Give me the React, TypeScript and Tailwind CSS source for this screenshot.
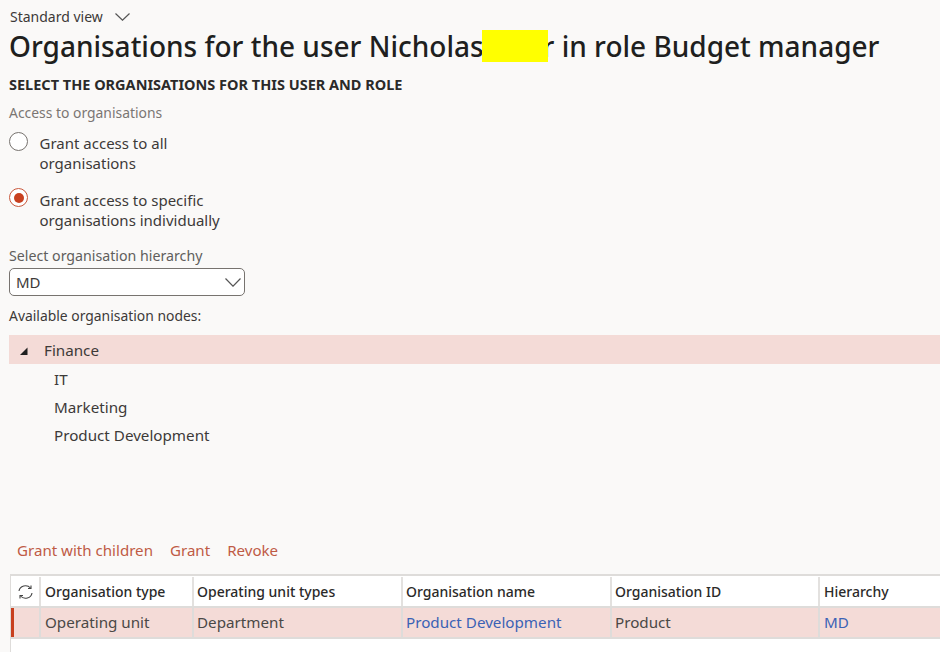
const font = { fontFamily: '"Noto Sans", sans-serif' }

function Chevron({ w, h }: { w: number; h: number }) {
  return (
    <svg width={w} height={h} viewBox={`0 0 ${w} ${h}`} fill="none" stroke="#555" strokeWidth="1.2">
      <path d={`M0.5 0.5 L${w / 2} ${h - 0.8} L${w - 0.5} 0.5`} />
    </svg>
  )
}

function Radio({ checked, lines }: { checked?: boolean; lines: string[] }) {
  return (
    <div className="flex items-start">
      <div
        className={`flex h-[19px] w-[19px] shrink-0 items-center justify-center rounded-full border-[1.5px] bg-white ${
          checked ? 'border-[#c9583c]' : 'border-[#77736f]'
        }`}
      >
        {checked && <div className="h-[10px] w-[10px] rounded-full bg-[#c8401f]" />}
      </div>
      <div className={`ml-[11.5px] text-[15px] leading-[20px] text-[#3d3a38] ${checked ? 'mt-[2px]' : 'mt-[1px]'}`}>
        {lines.map((l) => (
          <div key={l}>{l}</div>
        ))}
      </div>
    </div>
  )
}

export default function App() {
  return (
    <div
      className="flex h-[652px] w-[940px] flex-col overflow-hidden bg-[#faf9f8] text-[#323130]"
      style={font}
    >
      <div className="pl-[10px] pt-[8px] flex items-center text-[14px] leading-[18px] text-[#3d3a38]">
        Standard view
        <span className="ml-[12px]">
          <Chevron w={15} h={8} />
        </span>
      </div>
      <h1 className="pl-[9px] mt-[2px] flex h-[36px] items-center whitespace-nowrap text-[28px] font-medium leading-[36px] text-[#201f1e]">
        Organisations for the user Nicholas
        <span className="relative z-10 ml-[-2px] inline-block h-[32px] w-[66px] bg-[#ffff00]" />
        <span className="ml-[-5px] whitespace-pre">r in role Budget manager</span>
      </h1>
      <div className="pl-[9px] mt-[10px] text-[14.5px] font-bold leading-[20px] text-[#2b2a29]">
        SELECT THE ORGANISATIONS FOR THIS USER AND ROLE
      </div>
      <div className="pl-[9px] mt-[10px] text-[13.9px] leading-[18px] text-[#7a7673]">
        Access to organisations
      </div>

      <div className="pl-[9px] mt-[10px] flex flex-col gap-[15px]">
        <Radio lines={['Grant access to all', 'organisations']} />
        <Radio checked lines={['Grant access to specific', 'organisations individually']} />
      </div>

      <div className="pl-[9px] mt-[17px] text-[14.2px] leading-[18px] text-[#605e5c]">
        Select organisation hierarchy
      </div>
      <div className="ml-[9px] mt-[3px] flex h-[28px] w-[236px] items-center justify-between rounded-[5px] border-[1.5px] border-[#77736f] bg-white pl-[6px] pr-[3px] text-[15px] text-[#3d3a38]">
        MD
        <Chevron w={16} h={9} />
      </div>
      <div className="pl-[9px] mt-[11px] text-[13.9px] leading-[18px] text-[#3d3a38]">
        Available organisation nodes:
      </div>

      <div className="ml-[9px] mt-[10px] text-[15.2px] text-[#3d3a38]">
        <div className="mb-[1px] flex h-[29px] items-center bg-[#f4dbd7] pl-[10px] pt-[2px]">
          <svg width="10" height="10" viewBox="0 0 10 10" className="shrink-0">
            <path d="M8.5 1.5 V9 H1 Z" fill="#1f1f1f" />
          </svg>
          <span className="ml-[15px]">Finance</span>
        </div>
        {['IT', 'Marketing', 'Product Development'].map((n) => (
          <div key={n} className="flex h-[28px] items-center pl-[45px]">
            {n}
          </div>
        ))}
      </div>

      <div className="pl-[17px] mt-[91px] flex gap-[17px] text-[15.1px] leading-[20px] text-[#bf5b45]">
        <span>Grant with children</span>
        <span>Grant</span>
        <span>Revoke</span>
      </div>

      <div className="ml-[10px] mt-[14px] w-[960px] flex-1 border-l-[1.5px] border-t-[2px] border-[#dedcda] bg-white text-[14px]">
        <div className="flex h-[30px] items-center pt-[1px] font-medium text-[#2b2a29]">
          <div className="flex h-full w-[30px] items-center justify-center border-r-2 border-[#e3e1df]">
            <svg width="17" height="16" viewBox="0 0 17 16" fill="none" stroke="#444" strokeWidth="1.1">
              <path d="M2 7 A6.5 6 0 0 1 13.5 4" />
              <path d="M14 1.5 V4.5 H11" />
              <path d="M15 9 A6.5 6 0 0 1 3.5 12" />
              <path d="M3 14.5 V11.5 H6" />
            </svg>
          </div>
          <div className="flex h-full w-[153px] items-center border-r-2 border-[#e3e1df] pl-[4px]">Organisation type</div>
          <div className="flex h-full w-[209px] items-center border-r-2 border-[#e3e1df] pl-[3px]">Operating unit types</div>
          <div className="flex h-full w-[209px] items-center border-r-2 border-[#e3e1df] pl-[3px]">Organisation name</div>
          <div className="flex h-full w-[208px] items-center border-r-2 border-[#e3e1df] pl-[3px]">Organisation ID</div>
          <div className="flex h-full flex-1 items-center pl-[4px]">Hierarchy</div>
        </div>
        <div className="flex h-[33px] items-center border-y-2 border-[#dedcda] bg-[#f4dbd7] text-[15.2px] text-[#4a4846]">
          <div className="h-full w-[30px] border-r-2 border-[#dedcda]">
            <div className="h-full w-[3px] bg-[#c8401f]" />
          </div>
          <div className="flex h-full w-[153px] items-center border-r-2 border-[#dedcda] pl-[4px]">Operating unit</div>
          <div className="flex h-full w-[209px] items-center border-r-2 border-[#dedcda] pl-[3px]">Department</div>
          <div className="flex h-full w-[209px] items-center border-r-2 border-[#dedcda] pl-[3px] text-[#3b62b5]">Product Development</div>
          <div className="flex h-full w-[208px] items-center border-r-2 border-[#dedcda] pl-[3px]">Product</div>
          <div className="flex h-full flex-1 items-center pl-[4px] text-[#3b62b5]">MD</div>
        </div>
      </div>
    </div>
  )
}
